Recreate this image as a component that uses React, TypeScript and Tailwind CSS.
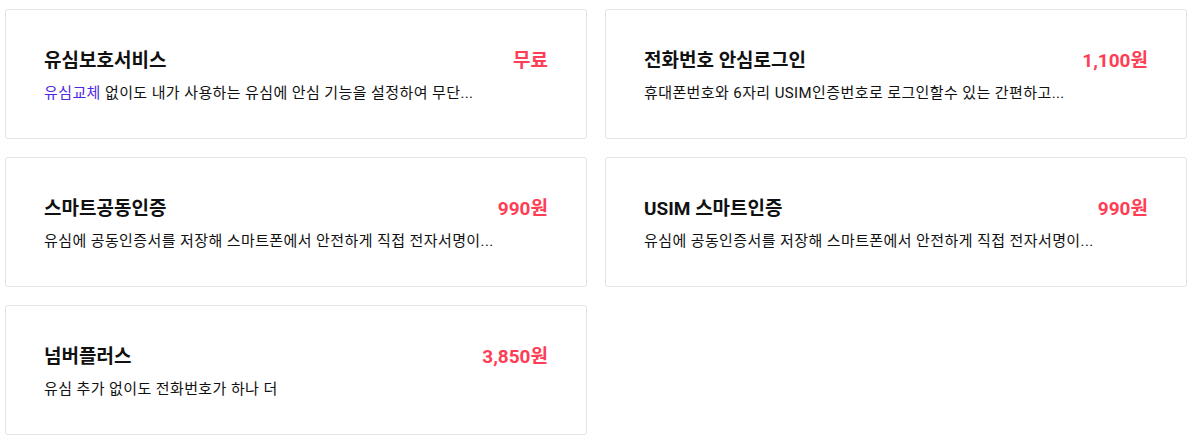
import React from 'react';

type Service = {
  title: string;
  price: string;
  highlight?: string;
  desc: string;
};

const services: Service[] = [
  { title: '유심보호서비스', price: '무료', highlight: '유심교체', desc: ' 없이도 내가 사용하는 유심에 안심 기능을 설정하여 무단...' },
  { title: '전화번호 안심로그인', price: '1,100원', desc: '휴대폰번호와 6자리 USIM인증번호로 로그인할수 있는 간편하고...' },
  { title: '스마트공동인증', price: '990원', desc: '유심에 공동인증서를 저장해 스마트폰에서 안전하게 직접 전자서명이...' },
  { title: 'USIM 스마트인증', price: '990원', desc: '유심에 공동인증서를 저장해 스마트폰에서 안전하게 직접 전자서명이...' },
  { title: '넘버플러스', price: '3,850원', desc: '유심 추가 없이도 전화번호가 하나 더' },
];

const ServiceCard: React.FC<{ item: Service }> = ({ item }) => (
  <div className="h-[130px] border border-[#e4e4e4] rounded-[3px] bg-white px-[38px] pt-[2px] flex flex-col justify-center">
    <div className="flex items-center justify-between">
      <h3 className="text-[19px] font-bold text-[#111] leading-[28px]">{item.title}</h3>
      <span className="text-[19px] font-bold text-[#ff3d55] leading-[28px]">{item.price}</span>
    </div>
    <p className="mt-[7px] text-[15px] text-[#111] leading-[22px] tracking-[0.4px]">
      {item.highlight && <span className="text-[#4f2ae6]">{item.highlight}</span>}
      {item.desc}
    </p>
  </div>
);

export default function App() {
  return (
    <div
      className="w-[1189px] h-[438px] bg-white pl-[5px] pt-[9px]"
      style={{ fontFamily: 'Roboto, "Noto Sans CJK KR", sans-serif' }}
    >
      <div className="grid grid-cols-[582px_582px] gap-x-[18px] gap-y-[18px]">
        {services.map((s) => (
          <ServiceCard key={s.title} item={s} />
        ))}
      </div>
    </div>
  );
}
